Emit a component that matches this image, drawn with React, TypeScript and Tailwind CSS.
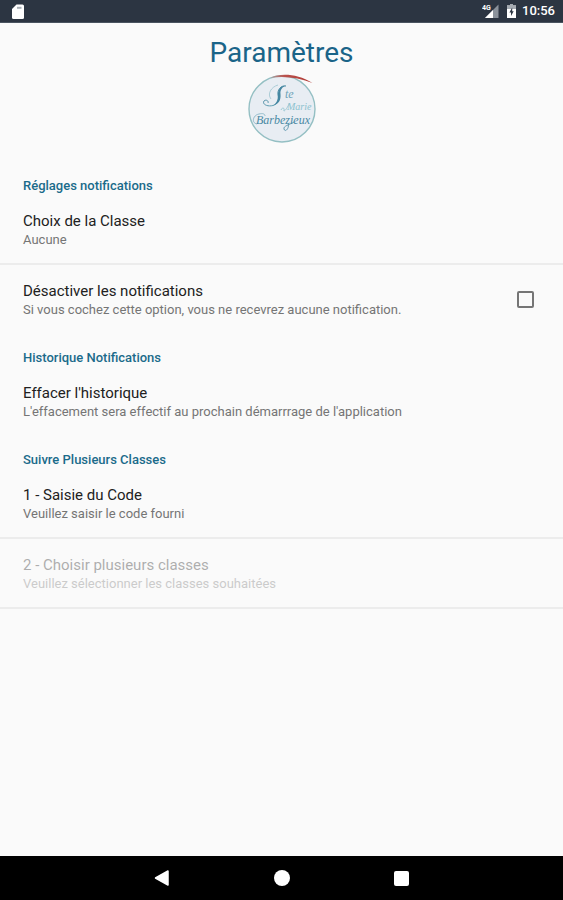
import { useState } from 'react';
import type { ReactNode } from 'react';

function StatusBar() {
  return (
    <div className="flex h-[23px] items-center justify-between border-b border-[#4a5460] bg-[#2c3542] px-2">
      {/* SD card */}
      <svg className="ml-1" width="12" height="15" viewBox="0 0 12 15" role="img" aria-label="Carte SD">
        <path d="M4.5 0.5H10.5A1.5 1.5 0 0 1 12 2V13.5A1.5 1.5 0 0 1 10.5 15H1.5A1.5 1.5 0 0 1 0 13.5V5Z" fill="#fff" />
        <path d="M5 3.8H9.5" stroke="#a9afb6" strokeWidth="2" />
      </svg>
      <div className="flex items-center">
        <svg width="17" height="16" viewBox="0 0 17 16" role="img" aria-label="Réseau 4G">
          <path d="M16.5 1.5V15H3Z" fill="#8b929b" />
          <path d="M11 7V15H3Z" fill="#fff" />
          <text x="0" y="7" fill="#fff" fontSize="7" fontWeight="700" fontFamily="Roboto, sans-serif">4G</text>
        </svg>
        <svg className="ml-2" width="9" height="14" viewBox="0 0 9 14" role="img" aria-label="Batterie">
          <path d="M3 0H6V1.5H9V14H0V1.5H3Z" fill="#fff" />
          <path d="M3 0H6V1.5H9V5H0V1.5H3Z" fill="#a5abb2" />
          <path d="M5.2 3.5L2.4 8.5H4V12L6.700 7.200H5.2Z" fill="#2c3542" />
        </svg>
        <span className="ml-1.5 text-[13px] leading-4 font-medium text-white">10:56</span>
      </div>
    </div>
  );
}

function SchoolLogo() {
  return (
    <svg width="70" height="70" viewBox="0 0 70 70" role="img" aria-label="Ste Marie Barbezieux">
      <defs>
        <linearGradient id="ink" x1="0" x2="1" y1="0" y2="1">
          <stop offset="0" stopColor="#2f6f8f" />
          <stop offset="1" stopColor="#79b7c4" />
        </linearGradient>
        <linearGradient id="stroke" x1="0" x2="1">
          <stop offset="0" stopColor="#a9a0a0" />
          <stop offset="0.35" stopColor="#b9504b" />
          <stop offset="1" stopColor="#b03a34" />
        </linearGradient>
      </defs>
      <circle cx="35" cy="36" r="33" fill="#e8edf3" stroke="#94bfc3" strokeWidth="1.4" />
      <path d="M23 5C33 0 50 0.5 65.500 10C52 4.5 36 2.5 23 5Z" fill="url(#stroke)" />
      {/* flourish around the capital S */}
      <path d="M39 13C34 12 30 17 31 22C32 27 31 31 26 32.500C20 34 15 31 17 28C19 26 22 28 21 30" fill="none" stroke="url(#ink)" strokeWidth="1" />
      <path d="M39 13C35 13.500 33 17.500 33.500 21C34 27 32 31 26 32.500C30 30 31 26.500 31 22.500C30.500 17 34 12 39 13Z" fill="#4587a2" />
      <path d="M24 26C20 21 24 14 31 12" fill="none" stroke="#9cc4cf" strokeWidth="0.8" />
      <g fontFamily="'Liberation Serif', serif" fontStyle="italic">
        <text x="38" y="25" fontSize="12" fill="#6fa3b8">te</text>
        <text x="40" y="37" fontSize="10" fill="#8cc2cf">Marie</text>
        <text x="9" y="51" fontSize="12" fill="#4889a3">Barbezieux</text>
      </g>
      <path d="M34 37C35 34 38 35 37 37C36 39 39 38 42 31" fill="none" stroke="#8cc2cf" strokeWidth="0.8" />
      <path d="M41 50C43 55 38 60 37 56C36 53 42 52 47 49" fill="none" stroke="#4889a3" strokeWidth="0.8" />
      <path d="M10 51C4 50 6 42 12 41C16 40 18 41 18 43" fill="none" stroke="#7fb0c2" strokeWidth="0.8" />
    </svg>
  );
}

function SectionTitle({ children }: { children: ReactNode }) {
  return <h2 className="px-[23px] pt-4 text-[13px] leading-[18px] font-medium text-[#1a6b8a]">{children}</h2>;
}

interface PreferenceProps {
  title: string;
  summary: string;
  disabled?: boolean;
}

function Preference({ title, summary, disabled }: PreferenceProps) {
  return (
    <button type="button" disabled={disabled} className="block w-full px-[23px] pt-4 pb-3.5 text-left disabled:opacity-35">
      <span className="block text-[15px] leading-5 text-[#212121]">{title}</span>
      <span className="block text-[13px] leading-[18px] text-[#757575]">{summary}</span>
    </button>
  );
}

function Divider() {
  return <hr className="border-t-2 border-[#ececec]" />;
}

export default function App() {
  const [muted, setMuted] = useState(false);

  return (
    <div className="flex min-h-screen flex-col bg-[#fafafa] font-['Roboto',sans-serif]">
      <StatusBar />

      <header className="flex flex-col items-center pt-3">
        <h1 className="text-[28px] leading-9 text-[#1a6488]">Paramètres</h1>
        <div className="mt-0.5">
          <SchoolLogo />
        </div>
      </header>

      <main className="flex-1 pt-[18px]">
        <SectionTitle>Réglages notifications</SectionTitle>
        <Preference title="Choix de la Classe" summary="Aucune" />
        <Divider />
        <div className="flex items-center justify-between pr-[29px] pl-[23px]">
          <label htmlFor="mute" className="flex-1 pt-4 pb-3.5">
            <span className="block text-[15px] leading-5 text-[#212121]">Désactiver les notifications</span>
            <span className="block text-[13px] leading-[18px] text-[#757575]">
              Si vous cochez cette option, vous ne recevrez aucune notification.
            </span>
          </label>
          <input
            id="mute"
            type="checkbox"
            checked={muted}
            onChange={(e) => setMuted(e.target.checked)}
            className="size-[17px] appearance-none rounded-xs border-2 border-[#757575] checked:bg-[#1a6b8a]"
          />
        </div>

        <SectionTitle>Historique Notifications</SectionTitle>
        <Preference title="Effacer l'historique" summary="L'effacement sera effectif au prochain démarrrage de l'application" />

        <SectionTitle>Suivre Plusieurs Classes</SectionTitle>
        <Preference title="1 - Saisie du Code" summary="Veuillez saisir le code fourni" />
        <Divider />
        <Preference title="2 - Choisir plusieurs classes" summary="Veuillez sélectionner les classes souhaitées" disabled />
        <Divider />
      </main>

      <nav className="flex h-11 items-center justify-center bg-black">
        <button type="button" aria-label="Retour" className="flex h-full w-[120px] items-center justify-center">
          <svg width="16" height="16" viewBox="0 0 16 16">
            <path d="M14 1V15L1.500 8Z" fill="#fff" stroke="#fff" strokeWidth="1.500" strokeLinejoin="round" />
          </svg>
        </button>
        <button type="button" aria-label="Accueil" className="flex h-full w-[120px] items-center justify-center">
          <span className="size-4 rounded-full bg-white" />
        </button>
        <button type="button" aria-label="Applications récentes" className="flex h-full w-[120px] items-center justify-center">
          <span className="size-[15px] rounded-xs bg-white" />
        </button>
      </nav>
    </div>
  );
}
